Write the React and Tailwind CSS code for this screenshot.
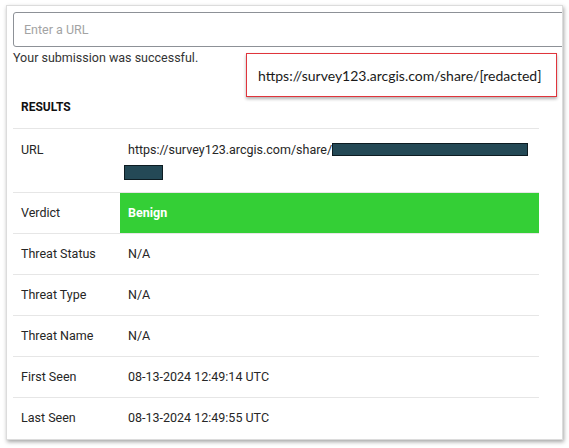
const rows = [
  { label: "Threat Status", value: "N/A" },
  { label: "Threat Type", value: "N/A" },
  { label: "Threat Name", value: "N/A" },
  { label: "First Seen", value: "08-13-2024 12:49:14 UTC" },
  { label: "Last Seen", value: "08-13-2024 12:49:55 UTC" },
];

const Row = ({ label, children, valueClass = "" }) => (
  <div className="flex border-t border-[#e6e6e6]">
    <div className="w-[107px] shrink-0 pl-2 h-[40px] flex items-center">{label}</div>
    <div className={`flex-1 pl-2 h-[40px] flex items-center ${valueClass}`}>{children}</div>
  </div>
);

const App = () => {
  return (
    <div className="w-[569px] h-[448px] bg-white pt-[5px] pl-[6px] font-['Roboto',sans-serif] text-[12.5px] text-[#262626]">
      <div className="relative w-[557px] h-[435px] bg-white border border-[#dcdcdc] shadow-[1px_2px_4px_rgba(0,0,0,0.35)] overflow-hidden pt-[6px] pl-[6px]">
        {/* URL input */}
        <input
          type="text"
          placeholder="Enter a URL"
          className="w-[570px] h-[35px] border border-[#8d9197] rounded-l-[3px] pl-[10px] text-[12.5px] outline-none placeholder:text-[#a3a3a3]"
        />
        <p className="mt-[3px] leading-[16px] text-[#333]">Your submission was successful.</p>

        <div className="mt-[33px] h-[16px] pl-2 text-[12px] font-bold leading-[16px] text-[#111]">RESULTS</div>

        {/* Results table */}
        <div className="mt-[13px] w-[526px]">
          <div className="flex border-t border-[#e6e6e6]">
            <div className="w-[107px] shrink-0 pl-2 pt-[9px] leading-[23px]">URL</div>
            <div className="flex-1 pl-2 pt-[9px] pb-[8px] leading-[23px]">
              <div className="flex items-center">
                <span>https://survey123.arcgis.com/share/</span>
                <span className="inline-block w-[196px] h-[13px] bg-[#244956] border border-[#0d1c22]"></span>
              </div>
              <div className="flex items-center h-[23px]">
                <span className="inline-block -ml-[4px] w-[39px] h-[15px] bg-[#244956] border border-[#0d1c22]"></span>
              </div>
            </div>
          </div>
          <Row label="Verdict" valueClass="bg-[#34cf36] text-white font-bold">
            Benign
          </Row>
          {rows.map((r) => (
            <Row key={r.label} label={r.label}>
              {r.value}
            </Row>
          ))}
        </div>

        {/* Callout over the form */}
        <div className="absolute left-[239px] top-[47px] w-[311px] h-[44px] border-[1.5px] border-[#e0353c] bg-white shadow-[0_2px_3px_rgba(0,0,0,0.3)] flex items-center pl-[11px] font-['Lato',sans-serif] text-[14px] text-[#1a1a1a]">
          https://survey123.arcgis.com/share/[redacted]
        </div>
      </div>
    </div>
  );
};

export default App;
